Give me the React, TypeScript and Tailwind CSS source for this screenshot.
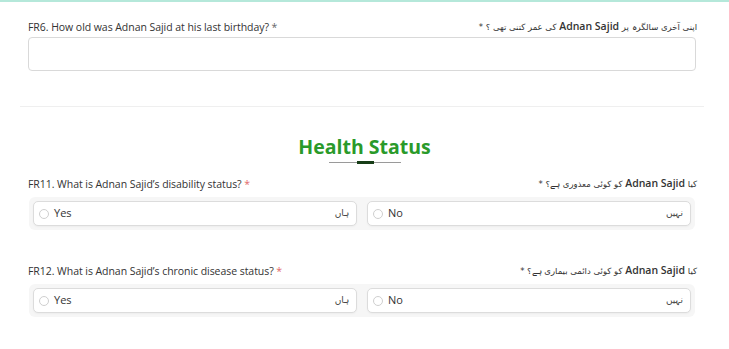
import React from "react";

const sans = { fontFamily: '"Open Sans", "Noto Sans", sans-serif' };
const urdu = { fontFamily: '"DejaVu Sans", "Noto Sans", sans-serif' };

function Label({ en, ur, redStar }: { en: string; ur: React.ReactNode; redStar?: boolean }) {
  return (
    <div className="flex items-center justify-between pl-[28px] pr-[32px] text-[10.5px] leading-[16px] text-[#333]">
      <span style={sans} className="font-medium tracking-[-0.05px]">
        {en} <span className={redStar ? "text-[#e26a6a]" : "text-[#666]"}>*</span>
      </span>
      <span dir="rtl" style={urdu} className="text-[8.5px] text-[#333]">
        {ur}
      </span>
    </div>
  );
}

function Name() {
  return (
    <span style={sans} className="text-[10.5px] font-semibold">
      Adnan Sajid
    </span>
  );
}

function Options() {
  const opt = (en: string, ur: string) => (
    <div className="flex h-[25px] items-center justify-between rounded-[5px] border border-[#dcdcdc] bg-white px-[5px] shadow-[0_1px_2px_rgba(0,0,0,0.04)]">
      <div className="flex items-center gap-[5px]">
        <span className="h-[10px] w-[10px] rounded-full border border-[#cfcfcf] bg-white" />
        <span style={sans} className="text-[11px] font-medium text-[#333]">{en}</span>
      </div>
      <span dir="rtl" style={urdu} className="pr-[2px] text-[9px] text-[#444]">{ur}</span>
    </div>
  );
  return (
    <div className="ml-[29px] mt-[5px] w-[666px] rounded-[6px] bg-[#f6f6f6] p-[4px]">
      <div className="grid grid-cols-2 gap-[10px]">
        {opt("Yes", "ہاں")}
        {opt("No", "نہیں")}
      </div>
    </div>
  );
}

export default function App() {
  return (
    <div className="relative h-[349px] w-[729px] overflow-hidden bg-white">
      <div className="h-[2px] w-full bg-[#b5e8da]" />
      <div className="pt-[16px]">
        <Label
          en="FR6. How old was Adnan Sajid at his last birthday?"
          ur={<>اپنی آخری سالگرہ پر <Name /> کی عمر کتنی تھی ؟ *</>}
        />
        <div className="ml-[28px] mr-[33px] mt-[2px] h-[34px] rounded-[4px] border border-[#d9d9d9] bg-white" />
      </div>
      <div className="ml-[20px] mr-[25px] mt-[35px] h-px bg-[#efefef]" />
      <div className="mt-[28px] flex flex-col items-center">
        <div style={sans} className="text-[19.5px] font-bold leading-[24px] text-[#2a9a2a]">
          Health Status
        </div>
        <div className="relative mt-[3px] h-px w-[72px] bg-[#9a9a9a]">
          <div className="absolute left-[28px] top-[-1px] h-[3px] w-[17px] bg-[#173d17]" />
        </div>
      </div>
      <div className="mt-[12px]">
        <Label
          en="FR11. What is Adnan Sajid’s disability status?"
          redStar
          ur={<>کیا <Name /> کو کوئی معذوری ہے؟ *</>}
        />
        <Options />
      </div>
      <div className="mt-[32px]">
        <Label
          en="FR12. What is Adnan Sajid’s chronic disease status?"
          redStar
          ur={<>کیا <Name /> کو کوئی دائمی بیماری ہے؟ *</>}
        />
        <Options />
      </div>
    </div>
  );
}
